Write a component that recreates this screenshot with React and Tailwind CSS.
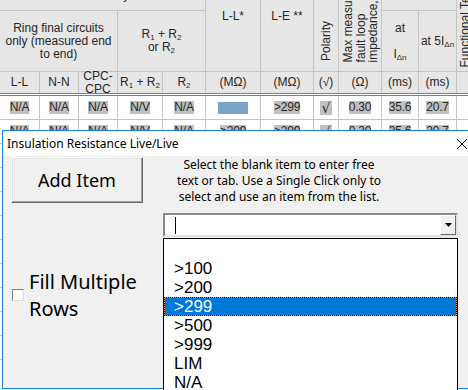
import React from 'react';

const COLS = 'grid grid-cols-[39px_38px_38px_44px_42px_54px_52px_24px_42px_36px_37px_40px] gap-px bg-[#c4c4c4]';

const rowOne = ['N/A', 'N/A', 'N/A', 'N/V', 'N/A', 'BLUE', '>299', '√', '0.30', '35.6', '20.7', '√'];
const rowTwo = ['N/A', 'N/A', 'N/A', 'N/V', 'N/A', '>299', '>299', '√', '0.30', '35.6', '20.7', '√'];
const listItems = ['', '>100', '>200', '>299', '>500', '>999', 'LIM', 'N/A'];

const Sub = ({ children }) => <sub className="text-[8px]">{children}</sub>;

const Head = ({ className = '', children }) => (
  <div className={`bg-[#e6e6e6] flex items-center justify-center text-center leading-[13px] ${className}`}>
    {children}
  </div>
);

const Vert = ({ className = '', children }) => (
  <div className={`bg-[#e6e6e6] flex items-end justify-center ${className}`}>
    <div className="[writing-mode:vertical-rl] rotate-180 leading-[12.5px] whitespace-nowrap">{children}</div>
  </div>
);

const DataCell = ({ value }) => (
  <div className="bg-white flex items-center justify-center">
    {value === 'BLUE' ? (
      <span className="w-[30px] h-[12px] bg-[#7ba4c8]" />
    ) : value === '√' ? (
      <span className="bg-[#c0c0c0] leading-[14px] px-[2px] text-[14px] font-['DejaVu_Sans',sans-serif]">√</span>
    ) : value ? (
      <span className="bg-[#c0c0c0] leading-[13px] tracking-[-0.2px]">{value}</span>
    ) : null}
  </div>
);

const Sheet = () => (
  <div className="-mt-[14px]">
    <div className={`${COLS} grid-rows-[24px_60px_21px]`}>
      <Head className="col-span-5 items-start pt-[3px]">Continuity</Head>
      <Head className="row-span-2 items-start pt-[24px]">L-L*</Head>
      <Head className="row-span-2 items-start pt-[24px]">L-E **</Head>
      <Vert className="row-span-2 pb-[10px]">Polarity</Vert>
      <Vert className="row-span-2 pb-[9px] pl-[2px]">
        Max measured
        <br />
        fault loop
        <br />
        impedance,
      </Vert>
      <Head className="col-span-2" />
      <Vert className="row-span-2 pb-[4px] justify-start pl-[2px]">Functional Test</Vert>

      <Head className="col-span-3">
        Ring final circuits
        <br />
        only (measured end
        <br />
        to end)
      </Head>
      <Head className="col-span-2">
        <span>
          R<Sub>1</Sub> + R<Sub>2</Sub>
          <br />
          or R<Sub>2</Sub>
        </span>
      </Head>
      <Head>
        <span>
          at
          <br />
          <br />I<Sub>Δn</Sub>
        </span>
      </Head>
      <Head>
        <span>
          at 5I<Sub>Δn</Sub>
        </span>
      </Head>

      <Head>L-L</Head>
      <Head>N-N</Head>
      <Head className="leading-[12px]">
        CPC-
        <br />
        CPC
      </Head>
      <Head>
        <span>
          R<Sub>1</Sub> + R<Sub>2</Sub>
        </span>
      </Head>
      <Head>
        <span>
          R<Sub>2</Sub>
        </span>
      </Head>
      <Head>(MΩ)</Head>
      <Head>(MΩ)</Head>
      <Head>(√)</Head>
      <Head>(Ω)</Head>
      <Head>(ms)</Head>
      <Head>(ms)</Head>
      <Head />
    </div>
    <div className="h-[3px] border-y border-[#7f7f7f] bg-white" />
    <div className={`${COLS} auto-rows-[23px]`}>
      {rowOne.map((v, i) => (
        <DataCell key={`a${i}`} value={v} />
      ))}
      {rowTwo.map((v, i) => (
        <DataCell key={`b${i}`} value={v} />
      ))}
      {Array.from({ length: 120 }).map((_, i) => (
        <DataCell key={`c${i}`} value="" />
      ))}
    </div>
  </div>
);

const Dialog = () => (
  <div className="absolute left-[2px] top-[130px] w-[480px] h-[259px] border border-[#1c7fd6] bg-[#f0f0f0] font-['Noto_Sans',sans-serif] text-black">
    <div className="h-[25px] bg-white flex items-center justify-between pl-[4px] pr-[14px]">
      <span className="text-[12px]">Insulation Resistance Live/Live</span>
      <svg width="10" height="10" viewBox="0 0 10 10">
        <path d="M0 0L10 10M10 0L0 10" stroke="#000" strokeWidth="1" />
      </svg>
    </div>
    <div className="flex">
      <div className="w-[160px] flex flex-col">
        <button className="ml-[8px] mt-[1px] w-[132px] h-[46px] bg-[#f0f0f0] border border-t-white border-l-white border-r-[#696969] border-b-[#696969] shadow-[inset_-1px_-1px_0_#a0a0a0,inset_1px_1px_0_#e3e3e3] text-[18px]">
          Add Item
        </button>
        <div className="ml-[9px] mt-[65px] flex items-center gap-[5px]">
          <span className="w-[12px] h-[12px] bg-white border border-t-[#808080] border-l-[#808080] border-r-[#dcdcdc] border-b-[#dcdcdc]" />
          <span className="text-[20px] leading-[27px]">
            Fill Multiple
            <br />
            Rows
          </span>
        </div>
      </div>
      <div className="w-[295px] flex flex-col">
        <p className="w-[232px] mt-[1px] text-center text-[12px] leading-[16px]">
          Select the blank item to enter free
          <br />
          text or tab. Use a Single Click only to
          <br />
          select and use an item from the list.
        </p>
        <div className="mt-[8px] h-[24px] flex items-center bg-white border-2 border-t-[#8a8a8a] border-l-[#8a8a8a] border-r-[#e3e3e3] border-b-[#e3e3e3]">
          <span className="ml-[10px] w-px h-[17px] bg-black" />
          <span className="ml-auto w-[16px] h-[20px] flex items-center justify-center bg-[#f0f0f0] border border-t-white border-l-white border-r-[#696969] border-b-[#696969]">
            <svg width="7" height="4" viewBox="0 0 7 4">
              <path d="M0 0H7L3.5 4Z" fill="#000" />
            </svg>
          </span>
        </div>
        <div className="relative z-10 mt-[1px] h-[154px] border border-black bg-white pt-[1px] font-['Liberation_Sans',Arial,sans-serif] text-[17px]">
          {listItems.map((item, i) =>
            item === '>299' ? (
              <div key={i} className="h-[19px] bg-[#f2a040] border border-dotted border-black">
                <div className="h-full bg-[#0078d7] text-white leading-[17px] pl-[9px]">{item}</div>
              </div>
            ) : (
              <div key={i} className="h-[19px] leading-[19px] pl-[10px]">
                {item}
              </div>
            )
          )}
        </div>
      </div>
    </div>
  </div>
);

export default function App() {
  return (
    <div className="relative w-[468px] h-[390px] overflow-hidden bg-white font-['Liberation_Sans',Arial,sans-serif] text-[12px] text-[#262626]">
      <Sheet />
      <Dialog />
    </div>
  );
}
